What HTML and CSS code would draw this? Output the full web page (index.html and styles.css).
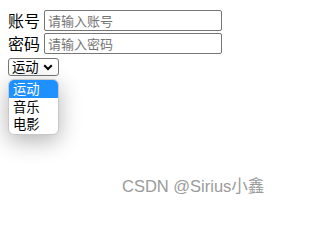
FILE: index.html
```html
<!DOCTYPE html>
<html>
<head>
<meta charset="utf-8">
<link rel="stylesheet" href="styles.css">
</head>
<body>
<div class="form">
  <div class="row"><span class="lbl">账号</span><input class="field" type="text" placeholder="请输入账号"></div>
  <div class="row"><span class="lbl">密码</span><input class="field" type="password" placeholder="请输入密码"></div>
  <div class="row sel-row">
    <div class="select"><span class="sel-text">运动</span>
      <svg class="chev" width="10" height="7" viewBox="0 0 10 7"><path d="M1.2 1.2 L5 5 L8.8 1.2" fill="none" stroke="#000" stroke-width="2"/></svg>
    </div>
    <div class="popup">
      <div class="opt active">运动</div>
      <div class="opt">音乐</div>
      <div class="opt">电影</div>
    </div>
  </div>
</div>
<div class="mark">CSDN @Sirius小鑫</div>
</body>
</html>
```
FILE: styles.css
```css
html, body { margin: 0; padding: 0; background: #fff; }
body {
  width: 280px; height: 202px; position: relative; overflow: hidden;
  font-family: "Noto Sans CJK SC", "Noto Sans", sans-serif;
}
.form { display: flex; flex-direction: column; gap: 2px; padding: 10px 0 0 8px; }
.row { display: flex; align-items: center; height: 21px; }
.lbl { font-size: 16px; line-height: 21px; width: 36px; color: #000; }
.field {
  box-sizing: border-box; width: 178px; height: 21px; margin: 0;
  border: 1px solid #767676; border-radius: 2px; padding: 0 3px;
  font-family: "Noto Sans CJK SC", sans-serif; font-size: 13px; outline: none;
}
.field::placeholder { color: #757575; }
.sel-row { position: relative; height: 18px; margin-top: 2px; }
.select {
  box-sizing: border-box; width: 51px; height: 18px;
  border: 1px solid #767676; border-radius: 3px;
  display: flex; align-items: center; padding: 0 4px 0 3px; gap: 4px;
}
.sel-text { font-size: 13.33px; line-height: 16px; color: #000; }
.chev { display: block; }
.popup {
  position: absolute; left: 0; top: 21px; width: 51px; box-sizing: border-box;
  background: #fff; border-radius: 6px; overflow: hidden;
  border: 1px solid #c8c8c8;
  box-shadow: 0 6px 22px rgba(0,0,0,0.3);
  padding-bottom: 1px;
}
.opt { height: 17.5px; line-height: 17px; font-size: 13.33px; padding-left: 4px; color: #000; }
.opt.active { background: #1e90ff; color: #fff; }
.mark {
  position: absolute; left: 122px; top: 173px;
  font-family: "Liberation Sans", "Noto Sans CJK SC", sans-serif;
  font-size: 16.5px; color: #9a9a9a; white-space: nowrap;
}
```
